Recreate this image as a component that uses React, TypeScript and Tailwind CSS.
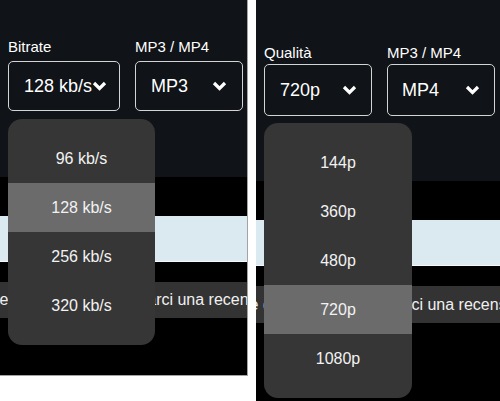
import React from "react";

interface PanelProps {
  label: string;
  value: string;
  format: string;
  options: string[];
  selected: string;
  right?: boolean;
}

function Chevron() {
  return (
    <svg width="15" height="10" viewBox="0 0 15 10" className="shrink-0">
      <polyline
        points="2,2 7.5,7.5 13,2"
        fill="none"
        stroke="white"
        strokeWidth="3.2"
        strokeLinejoin="miter"
      />
    </svg>
  );
}

const banner = "Non dimenticare di tornare e di lasciarci una recensione";

function Panel({ label, value, format, options, selected, right = false }: PanelProps) {
  return (
    <div
      className={
        right
          ? "relative w-[244px] h-[401px] bg-black flex flex-col overflow-hidden"
          : "relative w-[248px] h-[376px] bg-black flex flex-col overflow-hidden border-r border-b border-[#a3a3a3]"
      }
    >
      {/* Top controls */}
      <div
        className={
          right
            ? "h-[181px] bg-[#101317] pt-[44px] px-[8px]"
            : "h-[177px] bg-[#101317] pt-[38px] px-[8px]"
        }
      >
        <div className="flex gap-[15px]">
          <div className="flex flex-col">
            <span className={right ? "text-[15px] leading-[18px] text-white mb-[2px]" : "text-[15px] leading-[18px] text-white mb-[5px]"}>
              {label}
            </span>
            <div
              className={
                right
                  ? "w-[108px] h-[52px] rounded-[5px] border border-[#d4d4d4] flex items-center justify-between pl-[15px] pr-[14px] text-[18px] text-white"
                  : "w-[112px] h-[50px] rounded-[5px] border border-[#d4d4d4] flex items-center justify-between pl-[15px] pr-[13px] text-[18px] text-white"
              }
            >
              <span className="whitespace-nowrap">{value}</span>
              <Chevron />
            </div>
          </div>
          <div className="flex flex-col">
            <span className={right ? "text-[15px] leading-[18px] text-white mb-[2px]" : "text-[15px] leading-[18px] text-white mb-[5px]"}>
              MP3 / MP4
            </span>
            <div
              className={
                right
                  ? "w-[108px] h-[52px] rounded-[5px] border border-[#d4d4d4] flex items-center justify-between pl-[14px] pr-[14px] text-[18px] text-white"
                  : "w-[108px] h-[50px] rounded-[5px] border border-[#d4d4d4] flex items-center justify-between pl-[15px] pr-[15px] text-[18px] text-white"
              }
            >
              <span>{format}</span>
              <Chevron />
            </div>
          </div>
        </div>
      </div>

      {/* Page content below */}
      <div className="mt-[39px] h-[46px] bg-[#dbe9f1] border-b border-[#f4f8fa]" />
      <div
        className={
          right
            ? "mt-[20px] h-[37px] bg-[#333333] flex items-center overflow-hidden"
            : "mt-[20px] h-[36px] bg-[#333333] flex items-center overflow-hidden"
        }
      >
        <span
          className={
            right
              ? "whitespace-nowrap text-[16px] text-[#f0f0f0] ml-[-114px]"
              : "whitespace-nowrap text-[16px] text-[#f0f0f0] ml-[-108px]"
          }
        >
          {banner}
        </span>
      </div>

      {/* Open dropdown */}
      <div
        className={
          right
            ? "absolute left-[8px] top-[123px] w-[148px] rounded-[14px] bg-[#363636] py-[15px]"
            : "absolute left-[8px] top-[119px] w-[147px] rounded-[14px] bg-[#363636] py-[15px]"
        }
      >
        {options.map((opt) => (
          <div
            key={opt}
            className={
              opt === selected
                ? "h-[49px] flex items-center justify-center text-[16px] text-[#f2f2f2] bg-[#6b6b6b]"
                : "h-[49px] flex items-center justify-center text-[16px] text-[#f2f2f2]"
            }
          >
            {opt}
          </div>
        ))}
      </div>
    </div>
  );
}

export default function App() {
  return (
    <div
      className="flex w-[500px] h-[401px] bg-white overflow-hidden"
      style={{ fontFamily: '"Liberation Sans", Arial, sans-serif' }}
    >
      <Panel
        label="Bitrate"
        value="128 kb/s"
        format="MP3"
        options={["96 kb/s", "128 kb/s", "256 kb/s", "320 kb/s"]}
        selected="128 kb/s"
      />
      <div className="ml-[8px]">
        <Panel
          label="Qualità"
          value="720p"
          format="MP4"
          options={["144p", "360p", "480p", "720p", "1080p"]}
          selected="720p"
          right
        />
      </div>
    </div>
  );
}
